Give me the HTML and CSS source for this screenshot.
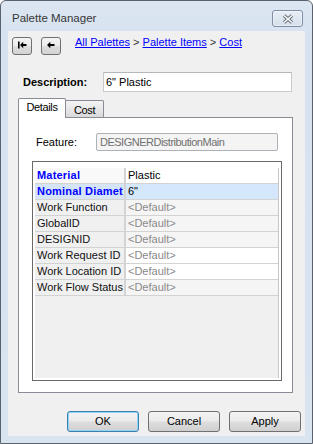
FILE: index.html
```html
<!DOCTYPE html>
<html>
<head>
<meta charset="utf-8">
<title>Palette Manager</title>
<link rel="stylesheet" href="styles.css">
</head>
<body>
<div class="window">
  <div class="titlebar">
    <span class="title">Palette Manager</span>
    <div class="close">
      <svg width="12" height="10" viewBox="0 0 12 10">
        <path d="M2 1.5 L10 8.5 M10 1.5 L2 8.5" stroke="#5d6776" stroke-width="3.4" fill="none"/>
        <path d="M2 1.5 L10 8.5 M10 1.5 L2 8.5" stroke="#ffffff" stroke-width="1.6" fill="none"/>
      </svg>
    </div>
  </div>
  <div class="client">
    <div class="nav">
      <div class="navbtn">
        <svg width="18" height="16" viewBox="0 0 18 16">
          <rect x="5" y="3.5" width="1.6" height="7" fill="#000"/>
          <polygon points="7,7 10.2,3.8 10.2,10.2" fill="#000"/>
          <rect x="9.5" y="6" width="4" height="2" fill="#000"/>
        </svg>
      </div>
      <div class="navbtn">
        <svg width="18" height="16" viewBox="0 0 18 16">
          <polygon points="5,7 8.3,3.8 8.3,10.2" fill="#000"/>
          <rect x="8" y="6" width="4.5" height="2" fill="#000"/>
        </svg>
      </div>
      <div class="crumbs"><a class="link">All Palettes</a> &gt; <a class="link">Palette Items</a> &gt; <a class="link">Cost</a></div>
    </div>

    <div class="desc-row">
      <span class="desc-label">Description:</span>
      <div class="desc-input">6" Plastic</div>
    </div>

    <div class="tabs">
      <div class="tab active">Details</div>
      <div class="tab inactive">Cost</div>
    </div>

    <div class="panel">
      <div class="feature-row">
        <span class="feature-label">Feature:</span>
        <div class="feature-input">DESIGNERDistributionMain</div>
      </div>
      <div class="grid">
        <div class="rows">
          <div class="row cat first">
            <div class="name">Material</div><div class="sep"></div><div class="val">Plastic</div>
          </div>
          <div class="row cat selected">
            <div class="name">Nominal Diamet</div><div class="sep"></div><div class="val">6"</div>
          </div>
          <div class="row">
            <div class="name">Work Function</div><div class="sep"></div><div class="val">&lt;Default&gt;</div>
          </div>
          <div class="row">
            <div class="name">GlobalID</div><div class="sep"></div><div class="val">&lt;Default&gt;</div>
          </div>
          <div class="row">
            <div class="name">DESIGNID</div><div class="sep"></div><div class="val">&lt;Default&gt;</div>
          </div>
          <div class="row">
            <div class="name">Work Request ID</div><div class="sep"></div><div class="val white">&lt;Default&gt;</div>
          </div>
          <div class="row">
            <div class="name">Work Location ID</div><div class="sep"></div><div class="val white">&lt;Default&gt;</div>
          </div>
          <div class="row">
            <div class="name">Work Flow Status</div><div class="sep"></div><div class="val">&lt;Default&gt;</div>
          </div>
        </div>
      </div>
    </div>

    <div class="buttons">
      <div class="btn default">OK</div>
      <div class="btn">Cancel</div>
      <div class="btn">Apply</div>
    </div>
  </div>
</div>
</body>
</html>
```

FILE: styles.css
```css
* { box-sizing: border-box; }
html, body { margin: 0; padding: 0; }
body {
  font-family: "Liberation Sans", Arial, sans-serif;
  font-size: 11px;
  color: #000;
  background: #ffffff;
}

.window {
  width: 313px;
  height: 444px;
  border: 1px solid #5a626d;
  border-radius: 6px 6px 0 0;
  background: linear-gradient(#dce6f2, #d6e2f0 40px, #d9e4f1);
  display: flex;
  flex-direction: column;
}

.titlebar {
  height: 30px;
  display: flex;
  align-items: flex-start;
  padding-left: 11px;
}
.title {
  margin-top: 11px;
  font-size: 11.5px;
  line-height: 13px;
  color: #363636;
}
.close {
  margin-left: auto;
  margin-right: 9px;
  margin-top: 9px;
  width: 31px;
  height: 17px;
  border: 1px solid #7f8ea4;
  border-radius: 3px;
  background: linear-gradient(#e8eef6, #d5dfeb);
  box-shadow: inset 0 0 0 1px rgba(255,255,255,0.45);
  display: flex;
  align-items: center;
  justify-content: center;
}

.client {
  margin: 0 7px 7px 7px;
  flex: 1;
  background: #f0f0f0;
  display: flex;
  flex-direction: column;
}

.nav {
  display: flex;
  align-items: flex-start;
  margin-top: 6px;
  padding-left: 4px;
  height: 18px;
}
.navbtn {
  width: 20px;
  height: 18px;
  border: 1px solid #707070;
  border-radius: 3px;
  background: linear-gradient(#f4f4f4 0%, #ececec 48%, #dedede 52%, #d2d2d2 100%);
  display: flex;
}
.navbtn + .navbtn { margin-left: 9px; }
.crumbs {
  margin-left: 14px;
  margin-top: -1px;
  line-height: 13px;
  color: #333;
  white-space: nowrap;
}
.link {
  color: #0000ff;
  text-decoration: underline;
}

.desc-row {
  display: flex;
  align-items: center;
  margin-top: 17px;
  height: 20px;
  padding-left: 15px;
}
.desc-label {
  width: 80px;
  font-weight: bold;
  line-height: 13px;
}
.desc-input {
  width: 189px;
  height: 20px;
  border: 1px solid #c6c9ce;
  border-top-color: #b4b7bc;
  background: #fff;
  padding-left: 2px;
  line-height: 18px;
}

.tabs {
  display: flex;
  align-items: flex-end;
  margin-top: 6px;
  margin-left: 10px;
  height: 19px;
  position: relative;
  z-index: 1;
}
.tab {
  border: 1px solid #898c95;
  border-bottom: none;
  text-align: center;
  line-height: 13px;
  letter-spacing: -0.35px;
}
.tab.active {
  width: 48px;
  height: 20px;
  margin-bottom: -1px;
  background: #fff;
  padding-top: 2px;
  border-radius: 2px 2px 0 0;
}
.tab.inactive {
  width: 39px;
  height: 17px;
  margin-left: -1px;
  padding-top: 3px;
  background: linear-gradient(#f4f4f4, #e6e6e6 55%, #d9d9d9);
  border-radius: 2px 2px 0 0;
}

.panel {
  margin-left: 10px;
  width: 275px;
  height: 276px;
  border: 1px solid #898c95;
  background: #fff;
}

.feature-row {
  display: flex;
  align-items: center;
  margin-top: 15px;
  height: 18px;
  padding-left: 17px;
}
.feature-label {
  width: 60px;
  line-height: 13px;
}
.feature-input {
  width: 182px;
  height: 18px;
  border: 1px solid #adb2b8;
  border-radius: 2px;
  background: #f4f4f4;
  color: #707070;
  padding-left: 3px;
  line-height: 16px;
  letter-spacing: -0.5px;
  white-space: nowrap;
}

.grid {
  margin: 10px 0 0 13px;
  width: 250px;
  height: 220px;
  border: 1px solid #6a6a6a;
  background: #fff;
  padding: 6px 2px 2px 2px;
}
.rows {
  height: 100%;
  background: #f0f0f0;
  border-right: 1px solid #c8c8c8;
}
.row {
  display: flex;
  height: 16px;
  border-bottom: 1px solid #d3d3d3;
  line-height: 15px;
}
.name {
  width: 89px;
  padding-left: 2px;
  white-space: nowrap;
  background: #f0f0f0;
  color: #111;
}
.sep {
  width: 2px;
  background: #d4d4d4;
}
.val {
  flex: 1;
  padding-left: 2px;
  background: #f5f5f5;
  color: #8a8a8a;
  white-space: nowrap;
}
.val.white { background: #fff; }

.row.cat .name {
  font-weight: bold;
  color: #0000ff;
  letter-spacing: 0.2px;
}
.row.cat .val { color: #000; }
.row.first .name { background: #f9f9f9; }
.row.first .val { background: #fff; }
.row.selected .name { background: #d5e5f7; }
.row.selected .val { background: #d4e7fb; }

.buttons {
  display: flex;
  margin-top: 18px;
  padding-left: 59px;
  gap: 9px;
}
.btn {
  width: 72px;
  height: 21px;
  border: 1px solid #707070;
  border-radius: 3px;
  background: linear-gradient(#f3f3f3 0%, #ebebeb 48%, #dddddd 52%, #d0d0d0 100%);
  text-align: center;
  line-height: 19px;
  color: #000;
}
.btn.default {
  border-color: #3c7fb1;
  box-shadow: inset 0 0 0 1px #8fd3f5;
}
```
